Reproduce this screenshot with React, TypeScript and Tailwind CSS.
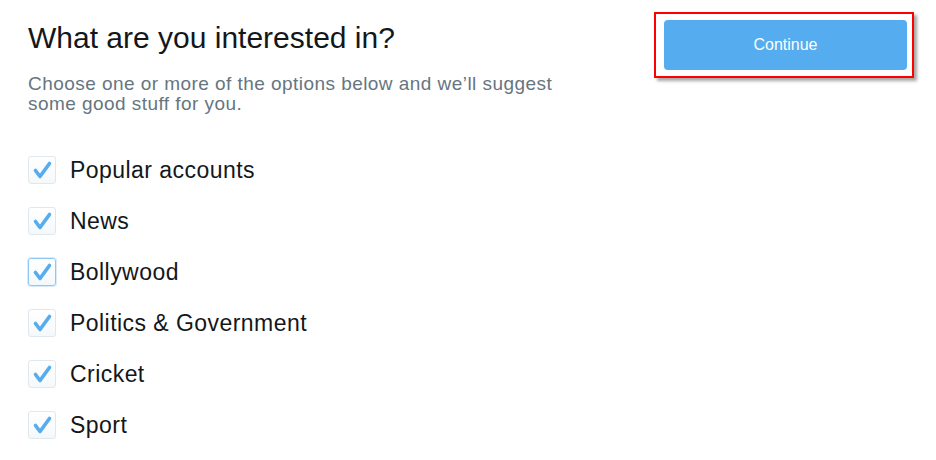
import React from "react";

const options = [
  { label: "Popular accounts", focus: false },
  { label: "News", focus: false },
  { label: "Bollywood", focus: true },
  { label: "Politics & Government", focus: false },
  { label: "Cricket", focus: false },
  { label: "Sport", focus: false },
];

function Check({ focus }: { focus: boolean }) {
  return (
    <div
      className={
        "w-[28px] h-[28px] rounded-[3px] border bg-gradient-to-b from-white to-[#f5f8fa] flex items-center justify-center shrink-0 " +
        (focus
          ? "border-[#8ec8f4] shadow-[0_0_0_1px_#d6ebfb]"
          : "border-[#e1e8ed]")
      }
    >
      <svg width="28" height="28" viewBox="0 0 28 28" className="-m-px">
        <polyline
          points="7.5,14.5 12,20.5 21.5,7.5"
          fill="none"
          stroke="#55acee"
          strokeWidth="3.6"
          strokeLinecap="round"
          strokeLinejoin="round"
        />
      </svg>
    </div>
  );
}

export default function App() {
  return (
    <div
      className="w-[936px] h-[460px] bg-white flex justify-between"
      style={{ fontFamily: '"Liberation Sans", Arial, sans-serif' }}
    >
      <div className="pl-[28px] pt-[21px]">
        <h1 className="text-[30px] leading-[34px] text-[#14171a] font-normal">
          What are you interested in?
        </h1>
        <p className="mt-[19px] text-[19px] leading-[20px] tracking-[0.45px] text-[#66757f] w-[555px]">
          Choose one or more of the options below and we’ll suggest some good
          stuff for you.
        </p>
        <div className="mt-[42px] flex flex-col gap-[23px]">
          {options.map((o) => (
            <div key={o.label} className="flex items-center gap-[14px]">
              <Check focus={o.focus} />
              <span className="text-[23px] leading-[28px] tracking-[0.45px] text-[#14171a]">
                {o.label}
              </span>
            </div>
          ))}
        </div>
      </div>
      <div className="pr-[22px] pt-[12px]">
        <div className="border-2 border-[#ff0000] shadow-[3px_3px_3px_rgba(0,0,0,0.35)] pl-[8px] pr-[5px] pt-[6px] pb-[6px]">
          <button className="w-[243px] h-[50px] rounded-[4px] bg-[#55acee] text-white text-[16px] flex items-center justify-center">
            Continue
          </button>
        </div>
      </div>
    </div>
  );
}
